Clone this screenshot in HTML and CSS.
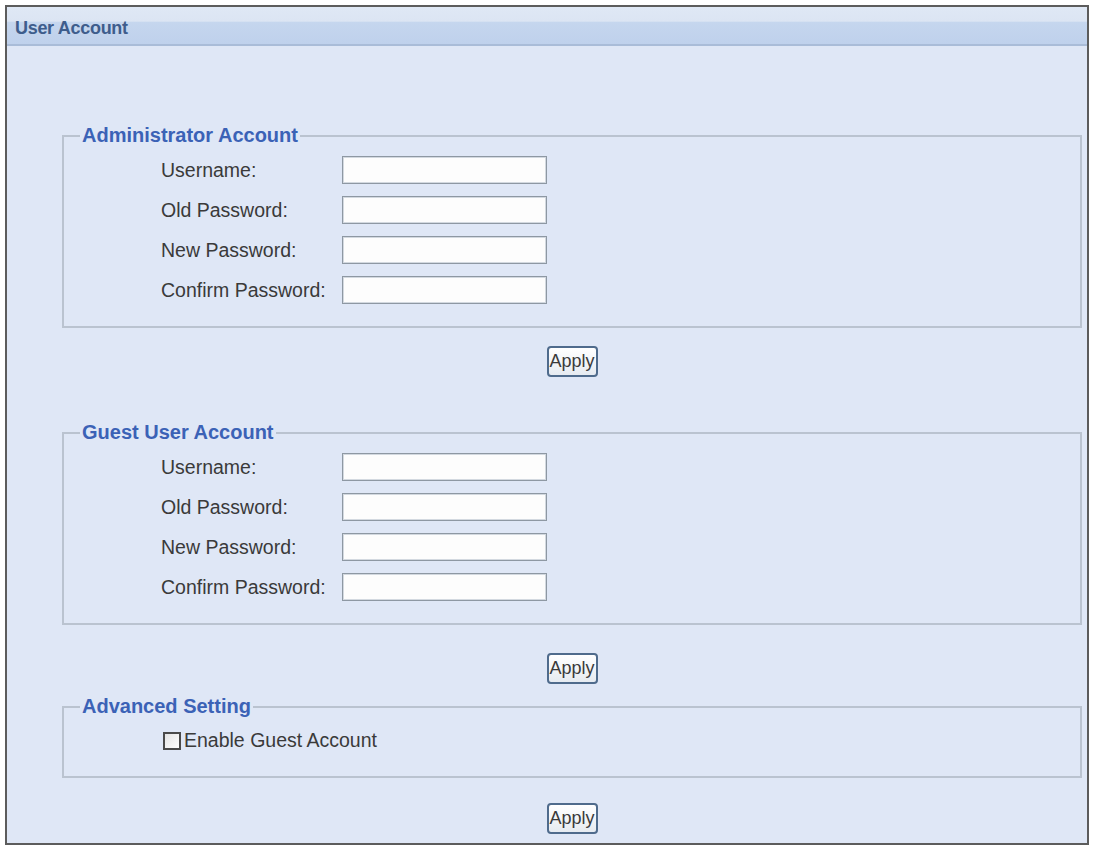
FILE: index.html
```html
<!DOCTYPE html>
<html lang="en">
<head>
    <meta charset="UTF-8">
    <title>User Account</title>
    <link rel="stylesheet" href="styles.css">
</head>
<body>
    <div class="frame">
        <div class="title-bar">
            <span class="title">User Account</span>
        </div>

        <div class="content">
            <fieldset class="group group-admin">
                <legend>Administrator Account</legend>
                <div class="rows">
                    <label>Username:</label>
                    <input type="text" class="field">
                    <label>Old Password:</label>
                    <input type="password" class="field">
                    <label>New Password:</label>
                    <input type="password" class="field">
                    <label>Confirm Password:</label>
                    <input type="password" class="field">
                </div>
            </fieldset>
            <div class="actions actions-admin">
                <button class="btn">Apply</button>
            </div>

            <fieldset class="group group-guest">
                <legend>Guest User Account</legend>
                <div class="rows">
                    <label>Username:</label>
                    <input type="text" class="field">
                    <label>Old Password:</label>
                    <input type="password" class="field">
                    <label>New Password:</label>
                    <input type="password" class="field">
                    <label>Confirm Password:</label>
                    <input type="password" class="field">
                </div>
            </fieldset>
            <div class="actions actions-guest">
                <button class="btn">Apply</button>
            </div>

            <fieldset class="group group-advanced">
                <legend>Advanced Setting</legend>
                <label class="check-row">
                    <input type="checkbox" class="check">Enable Guest Account
                </label>
            </fieldset>
            <div class="actions actions-advanced">
                <button class="btn">Apply</button>
            </div>
        </div>
    </div>
</body>
</html>
```

FILE: styles.css
```css
* {
    box-sizing: border-box;
    margin: 0;
    padding: 0;
}

body {
    font-family: 'Liberation Sans', Arial, sans-serif;
    background-color: #ffffff;
    color: #3a3a3a;
}

.frame {
    margin: 5px 0 0 5px;
    width: 1084px;
    border: 2px solid #5c5c5c;
    background-color: #dfe7f6;
}

.title-bar {
    height: 39px;
    padding: 12px 0 0 8px;
    background: linear-gradient(to bottom, #dfe8f5 0%, #dce5f3 38%, #c5d6ee 42%, #bfd1ec 100%);
    border-bottom: 2px solid #a9bcd8;
}

.title {
    display: block;
    font-size: 18px;
    font-weight: bold;
    line-height: 18px;
    letter-spacing: -0.3px;
    color: #3e5d8c;
}

.content {
    padding: 78px 5px 9px 55px;
}

.group {
    border: 2px solid #bac3d0;
    padding: 0;
}

.group legend {
    margin-left: 16px;
    padding: 0 2px;
    font-size: 20px;
    line-height: 23px;
    font-weight: bold;
    color: #3b62b6;
}

.rows {
    display: grid;
    grid-template-columns: 181px 205px;
    row-gap: 12px;
    align-items: center;
    margin: 9px 0 22px 97px;
}

.rows label {
    font-size: 19.5px;
    color: #3a3a3a;
}

.field {
    width: 205px;
    height: 28px;
    border: 1px solid #8e98a3;
    box-shadow: inset 0 0 0 1px #d3d9e0;
    background-color: #fdfdfd;
    font-size: 15px;
    padding: 0 4px;
}

.actions {
    display: flex;
    justify-content: center;
}

.actions-admin {
    margin: 18px 0 44px;
}

.actions-guest {
    margin: 28px 0 11px;
}

.actions-advanced {
    margin-top: 25px;
}

.btn {
    width: 51px;
    height: 31px;
    padding: 0;
    border: 2px solid #4f6b8c;
    border-radius: 4px;
    background: linear-gradient(to bottom, #ffffff, #e6ebf1);
    font-family: 'Liberation Sans', Arial, sans-serif;
    font-size: 18px;
    color: #3a3a3a;
    cursor: pointer;
}

.check-row {
    display: flex;
    align-items: center;
    margin: 11px 0 24px 99px;
    font-size: 19.5px;
    color: #3a3a3a;
}

.check {
    appearance: none;
    width: 18px;
    height: 18px;
    margin-right: 3px;
    border: 2px solid #4a4a4a;
    background: linear-gradient(135deg, #e4e4e4, #ffffff);
}
```
